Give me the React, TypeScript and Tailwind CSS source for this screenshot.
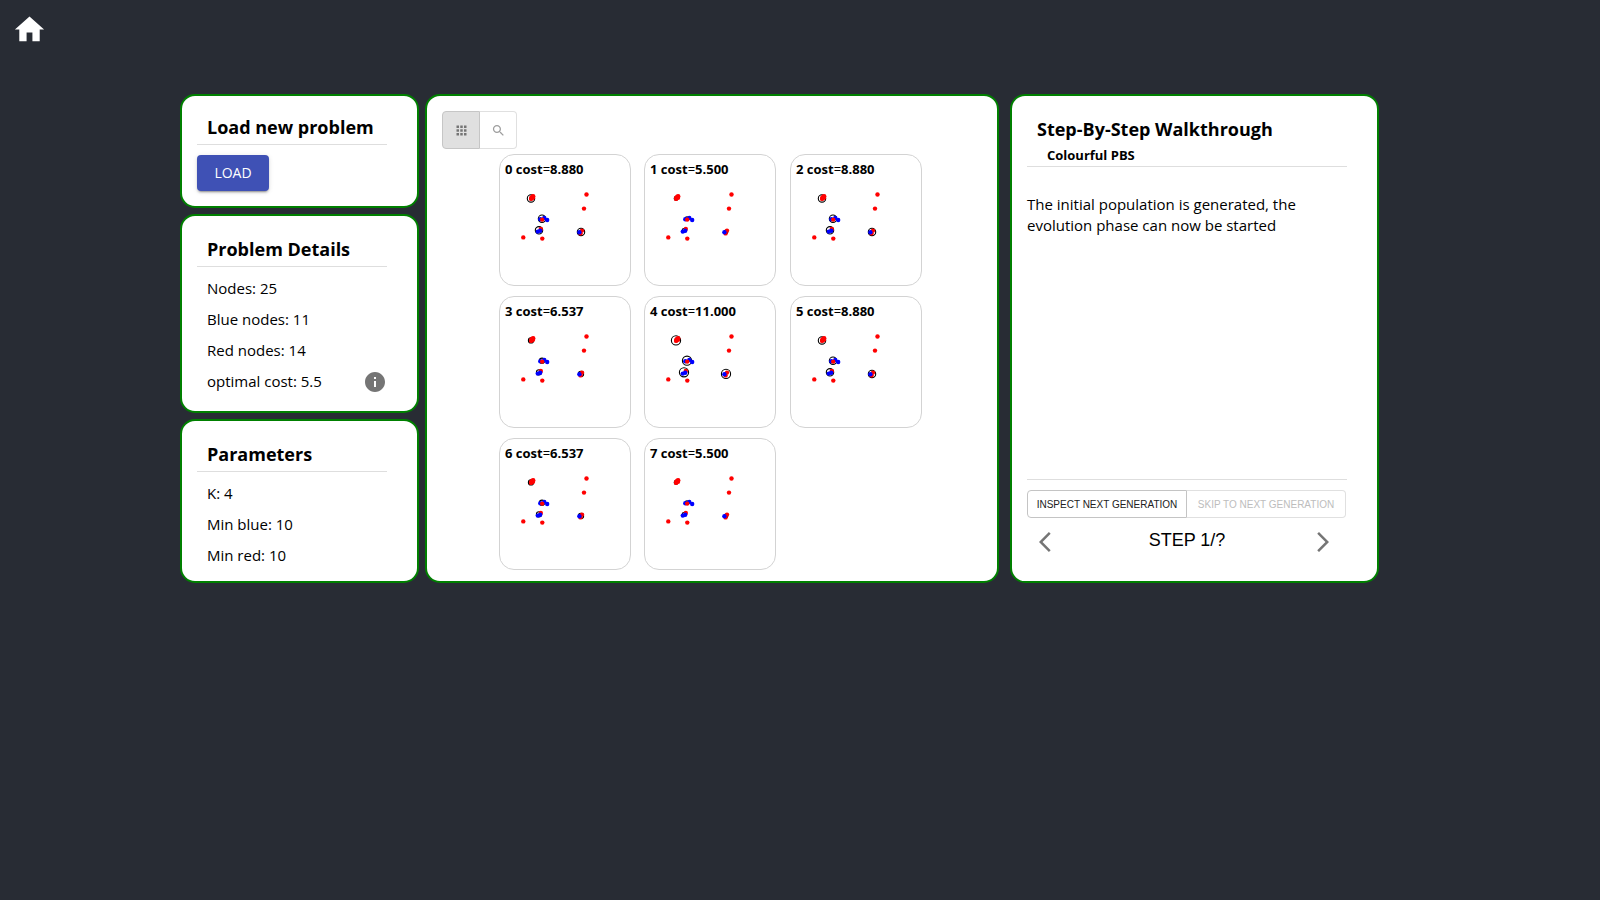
import type { ReactNode } from "react";

type Dot = [x: number, y: number, color: "red" | "blue"];

const DOTS: Dot[] = [
  [87.5, 40.5, "red"],
  [85, 54.6, "red"],
  [24.3, 83.4, "red"],
  [43.3, 84.6, "red"],
  [34.2, 42.3, "red"],
  [33.2, 42.8, "red"],
  [34, 43.8, "red"],
  [32.3, 43.8, "red"],
  [32.1, 44.9, "red"],
  [41.3, 65.3, "blue"],
  [45.3, 64, "blue"],
  [48.2, 66, "blue"],
  [43.2, 65.6, "red"],
  [41.8, 75, "red"],
  [38.8, 77.6, "blue"],
  [41.2, 76.8, "blue"],
  [83, 76.6, "red"],
  [81.6, 79.4, "red"],
  [80.4, 78.3, "blue"],
];

const CENTERS: [number, number][] = [
  [32, 44.4],
  [43, 64.7],
  [40, 76.3],
  [82, 77.9],
];

const SOLUTIONS = [
  { cost: "8.880", radius: 3.7 },
  { cost: "5.500", radius: 1.8 },
  { cost: "8.880", radius: 3.7 },
  { cost: "6.537", radius: 2.6 },
  { cost: "11.000", radius: 4.6 },
  { cost: "8.880", radius: 3.7 },
  { cost: "6.537", radius: 2.6 },
  { cost: "5.500", radius: 1.8 },
];

function Icon({ path, className }: { path: string; className: string }) {
  return (
    <svg viewBox="0 0 24 24" fill="currentColor" className={className} aria-hidden="true">
      <path d={path} />
    </svg>
  );
}

function Panel({ children, className }: { children: ReactNode; className: string }) {
  return (
    <section className={`rounded-[15px] border-2 border-[#008000] bg-white px-[15px] ${className}`}>
      {children}
    </section>
  );
}

function Title({ children }: { children: ReactNode }) {
  return <h2 className="pl-2.5 text-[18px] leading-[26px] font-bold whitespace-nowrap">{children}</h2>;
}

function Rule({ className }: { className: string }) {
  return <hr className={`mr-[15px] border-[#dedede] ${className}`} />;
}

function Solution({ index, cost, radius }: { index: number; cost: string; radius: number }) {
  return (
    <article className="h-[132px] w-[132px] rounded-[15px] border border-[#d3d3d3]">
      <svg viewBox="0 0 132 132" className="-m-px size-[132px]">
        <text x="6" y="20" fontSize="13" fontWeight="700" fill="#000">
          {index} cost<tspan fontWeight="400">=</tspan>
          {cost}
        </text>
        {CENTERS.map(([x, y], i) => (
          <circle key={i} cx={x} cy={y} r={radius} fill="none" stroke="#000" strokeWidth="1.1" />
        ))}
        {DOTS.map(([x, y, color], i) => (
          <circle key={i} cx={x} cy={y} r="2.2" fill={color} />
        ))}
      </svg>
    </article>
  );
}

export default function App() {
  return (
    <div className="min-h-screen bg-[#282c34] font-['Segoe_UI','Open_Sans',sans-serif] text-black">
      <header className="h-[94px] p-3">
        <a href="#" aria-label="Home" className="inline-block text-white">
          <Icon path="M10 20v-6h4v6h5v-8h3L12 3 2 12h3v8z" className="size-[35px]" />
        </a>
      </header>

      <main className="mx-auto flex max-w-[1240px] gap-1.5 pr-[41px]">
        <div className="flex w-[239px] shrink-0 flex-col gap-1.5">
          <Panel className="pt-[18px] pb-[15px]">
            <Title>Load new problem</Title>
            <Rule className="mt-1" />
            <button
              type="button"
              className="mt-2.5 block h-9 w-[72px] rounded bg-[#3f51b5] text-sm font-medium text-white shadow-[0_3px_1px_-2px_rgba(0,0,0,0.2),0_2px_2px_0_rgba(0,0,0,0.14),0_1px_5px_0_rgba(0,0,0,0.12)]"
            >
              LOAD
            </button>
          </Panel>

          <Panel className="pt-5 pb-3.5">
            <Title>Problem Details</Title>
            <Rule className="mt-1 mb-1.5" />
            <ul className="pl-2.5 text-[15px] leading-[31px]">
              <li>Nodes: 25</li>
              <li>Blue nodes: 11</li>
              <li>Red nodes: 14</li>
              <li className="flex items-center justify-between pr-[15px]">
                optimal cost: 5.5
                <button type="button" aria-label="About the optimal cost" className="text-[#757575]">
                  <Icon
                    path="M12 2C6.48 2 2 6.48 2 12s4.48 10 10 10 10-4.48 10-10S17.52 2 12 2zm1 15h-2v-6h2v6zm0-8h-2V7h2v2z"
                    className="size-6"
                  />
                </button>
              </li>
            </ul>
          </Panel>

          <Panel className="pt-5 pb-2.5">
            <Title>Parameters</Title>
            <Rule className="mt-1 mb-1.5" />
            <ul className="pl-2.5 text-[15px] leading-[31px]">
              <li>K: 4</li>
              <li>Min blue: 10</li>
              <li>Min red: 10</li>
            </ul>
          </Panel>
        </div>

        <Panel className="min-w-0 flex-1 pt-[15px] pb-[11px]">
          <div className="flex">
            <button
              type="button"
              aria-label="Grid view"
              aria-pressed="true"
              className="flex h-[38px] w-[38px] items-center rounded-l border border-[#c6c6c6] bg-[#e0e0e0] pl-[11px] text-[#757575]"
            >
              <Icon
                path="M4 8h4V4H4v4zm6 12h4v-4h-4v4zm-6 0h4v-4H4v4zm0-6h4v-4H4v4zm6 0h4v-4h-4v4zm6-10v4h4V4h-4zm-6 4h4V4h-4v4zm6 6h4v-4h-4v4zm0 6h4v-4h-4v4z"
                className="size-[15px]"
              />
            </button>
            <button
              type="button"
              aria-label="Inspect view"
              aria-pressed="false"
              className="flex h-[38px] w-[37px] items-center rounded-r border border-l-0 border-[#e0e0e0] pl-[11px] text-[#9e9e9e]"
            >
              <Icon
                path="M15.5 14h-.79l-.28-.27C15.41 12.59 16 11.11 16 9.5 16 5.91 13.09 3 9.5 3S3 5.91 3 9.5 5.91 16 9.5 16c1.61 0 3.09-.59 4.23-1.57l.27.28v.79l5 4.99L20.49 19l-4.99-5zm-6 0C7.01 14 5 11.99 5 9.5S7.01 5 9.5 5 14 7.01 14 9.5 11.99 14 9.5 14z"
                className="size-[15px]"
              />
            </button>
          </div>
          <div className="mt-[5px] ml-[57px] grid max-w-[436px] grid-cols-3 gap-y-2.5">
            {SOLUTIONS.map((s, i) => (
              <Solution key={i} index={i} cost={s.cost} radius={s.radius} />
            ))}
          </div>
        </Panel>

        <Panel className="ml-[5px] flex w-[369px] shrink-0 flex-col pt-5 pb-[15px]">
          <Title>Step-By-Step Walkthrough</Title>
          <h3 className="mt-[3px] mb-px pl-5 text-[13px] leading-5 font-bold">Colourful PBS</h3>
          <Rule className="" />
          <p className="mt-[27px] mr-[15px] text-[15px] leading-[21px]">
            The initial population is generated, the evolution phase can now be started
          </p>
          <Rule className="mt-auto" />
          <div className="mt-2.5 mr-4 flex font-['Liberation_Sans',Arial,sans-serif] text-[10px] whitespace-nowrap">
            <button type="button" className="h-7 flex-1 rounded-l border border-[#c4c4c4] text-[#212121]">
              INSPECT NEXT GENERATION
            </button>
            <button
              type="button"
              disabled
              className="h-7 flex-1 rounded-r border border-l-0 border-[#e0e0e0] text-[#bdbdbd]"
            >
              SKIP TO NEXT GENERATION
            </button>
          </div>
          <div className="mr-[15px] flex justify-between text-[#757575]">
            <button type="button" aria-label="Previous step" className="p-3">
              <Icon path="M11.67 3.87L9.9 2.1 0 12l9.9 9.9 1.77-1.77L3.54 12z" className="size-6" />
            </button>
            <span className="font-['Liberation_Sans',Arial,sans-serif] text-[18px] leading-[44px] text-black">
              STEP 1/?
            </span>
            <button type="button" aria-label="Next step" className="p-3">
              <Icon path="M6.23 20.23L8 22l10-10L8 2 6.23 3.77 14.46 12z" className="size-6" />
            </button>
          </div>
        </Panel>
      </main>
    </div>
  );
}
